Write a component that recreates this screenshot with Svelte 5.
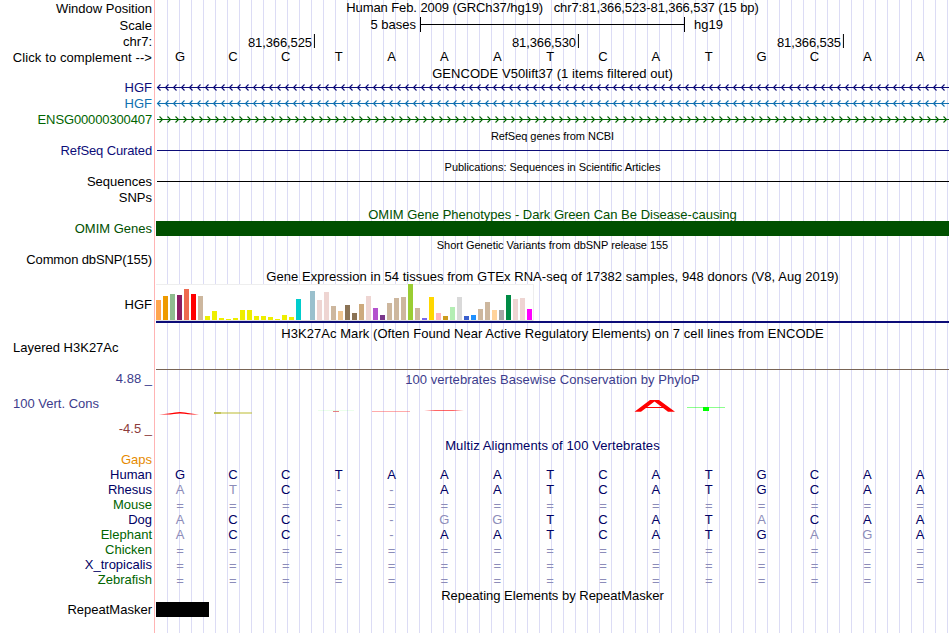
<script lang="ts">
	const strip = (s: string) => s.split("");

	const navy = "#0c0c78";
	const green = "#006400";

	const ticks = [
		{ x: 158, label: "81,366,525" },
		{ x: 422, label: "81,366,530" },
		{ x: 687, label: "81,366,535" },
	];

	const genes = [
		{ name: "HGF", color: navy, dir: -1 },
		{ name: "HGF", color: "#1070b0", dir: -1 },
		{ name: "ENSG00000300407", color: green, dir: 1 },
	];

	const tissues: [number, string][] = [
		[20, "#ffa54f"], [24, "#ee9a00"], [26, "#8fbc8f"], [25, "#8b1c62"], [31, "#ee6a50"], [26, "#ff0000"],
		[24, "#cdb79e"], [4, "#eeee00"], [9, "#eeee00"], [2, "#eeee00"], [1, "#eeee00"], [2, "#eeee00"],
		[10, "#eeee00"], [10, "#eeee00"], [4, "#eeee00"], [4, "#eeee00"], [3, "#eeee00"], [1, "#eeee00"],
		[5, "#eeee00"], [3, "#eeee00"], [21, "#00cdcd"], [0, "#ee82ee"], [29, "#9ac0cd"], [20, "#eed5d2"],
		[28, "#eed5d2"], [14, "#cdb79e"], [9, "#eec591"], [15, "#8b7355"], [7, "#8b7355"], [16, "#cdaa7d"],
		[24, "#eed5d2"], [12, "#b452cd"], [5, "#7a378b"], [17, "#cdb79e"], [22, "#cdb79e"], [23, "#cdb79e"],
		[36, "#9acd32"], [12, "#cdb79e"], [2, "#7a67ee"], [23, "#ffd700"], [7, "#ffb6c1"], [4, "#cd9b1d"],
		[13, "#b4eeb4"], [23, "#d9d9d9"], [4, "#3a5fcd"], [5, "#1e90ff"], [11, "#cdb79e"], [18, "#cdb79e"],
		[10, "#ffd39b"], [10, "#a6a6a6"], [25, "#008b45"], [21, "#eed5d2"], [22, "#eed5d2"], [11, "#ff00ff"],
	];

	// lower case marks a base that differs from human
	const species = [
		{ name: "Gaps", color: "#e68a00", seq: "" },
		{ name: "Human", color: "#000064", seq: "GCCTAAATCATGCAA" },
		{ name: "Rhesus", color: "#000064", seq: "atC--AATCATGCAA" },
		{ name: "Mouse", color: green, seq: "===============" },
		{ name: "Dog", color: "#000064", seq: "aCC--ggTCATaCAA" },
		{ name: "Elephant", color: green, seq: "aCC--AATCATGagA" },
		{ name: "Chicken", color: green, seq: "===============" },
		{ name: "X_tropicalis", color: "#000064", seq: "===============" },
		{ name: "Zebrafish", color: green, seq: "===============" },
	];

	function chevrons(dir: number) {
		let d = "";
		for (let x = dir < 0 ? 1.5 : 6.5; x < 793; x += 8) {
			d += `M${x - dir * 3} 4.5L${x} 7.5L${x - dir * 3} 10.5`;
		}
		return d;
	}
</script>

{#snippet title(text: string, height: number, pad = 0, color = "#000", kind = "")}
	<div class="row" style:height="{height}px">
		<div class="label"></div>
		<div class="title {kind}" style:padding-top="{pad}px" style:color>{text}</div>
	</div>
{/snippet}

<div class="browser">
	<div class="row h16">
		<div class="label down1">Window Position</div>
		<div class="title tight">Human Feb. 2009 (GRCh37/hg19)&nbsp;&nbsp; chr7:81,366,523-81,366,537 (15 bp)</div>
	</div>

	<div class="row h16">
		<div class="label down2">Scale</div>
		<div class="scale">
			<span class="scale-size">5 bases</span>
			<span class="scale-bar"></span>
			<span>hg19</span>
		</div>
	</div>

	<div class="row h16">
		<div class="label down2">chr7:</div>
		<div class="ruler">
			{#each ticks as tick}
				<span class="tick" style:left="{tick.x}px">{tick.label}</span>
			{/each}
		</div>
	</div>

	<div class="row h18">
		<div class="label down2 wide">Click to complement --&gt;</div>
		<div class="bases down1">
			{#each strip("GCCTAAATCATGCAA") as base}<span>{base}</span>{/each}
		</div>
	</div>

	{@render title("GENCODE V50lift37 (1 items filtered out)", 14, 0, "#000", "loose")}
	{#each genes as gene}
		<div class="row h16" style:color={gene.color}>
			<div class="label" class:narrow={gene.name.length > 3}>{gene.name}</div>
			<svg class="gene" width="793" height="16">
				<path d={chevrons(gene.dir)} fill="none" stroke="currentColor" stroke-width="1.1" />
				<rect x="1" y="7" width="792" height="1" fill="currentColor" />
			</svg>
		</div>
	{/each}

	{@render title("RefSeq genes from NCBI", 15, 1, "#000", "small")}
	<div class="row h16 navy">
		<div class="label narrow">RefSeq Curated</div>
		<div class="line"></div>
	</div>

	{@render title("Publications: Sequences in Scientific Articles", 15, 1, "#000", "small")}
	<div class="row h16">
		<div class="label">Sequences</div>
		<div class="line"></div>
	</div>
	<div class="row h16">
		<div class="label">SNPs</div>
	</div>

	{@render title("OMIM Gene Phenotypes - Dark Green Can Be Disease-causing", 15, 1, "#005000")}
	<div class="row h16 omim">
		<div class="label">OMIM Genes</div>
		<div class="block"></div>
	</div>

	{@render title("Short Genetic Variants from dbSNP release 155", 15, 1, "#000", "small")}
	<div class="row h16">
		<div class="label narrow">Common dbSNP(155)</div>
	</div>

	{@render title("Gene Expression in 54 tissues from GTEx RNA-seq of 17382 samples, 948 donors (V8, Aug 2019)", 16, 1, "#000", "loose")}
	<div class="row gtex">
		<div class="label">HGF</div>
		<div class="gtex-track">
			<div class="chart">
				{#each tissues as [value, color]}
					<i style:height="{value}px" style:background={color}></i>
				{/each}
			</div>
		</div>
	</div>

	{@render title("H3K27Ac Mark (Often Found Near Active Regulatory Elements) on 7 cell lines from ENCODE", 17, 3, "#000", "loose")}
	<div class="row layered">
		<div class="label left">Layered H3K27Ac</div>
		<div class="baseline"></div>
	</div>

	<div class="row h18 cons">
		<div class="label down1">4.88 _</div>
		<div class="title down2 loose">100 vertebrates Basewise Conservation by PhyloP</div>
	</div>
	<div class="row phylop cons">
		<div class="label left">100 Vert. Cons</div>
		<svg width="793" height="30">
			<path d="M3 26.4Q14 25.6 19 24.6Q24 23.6 29 24.6Q34 25.6 43 26.4Q33 26.9 28 25.8Q23 25.2 18 26Q13 26.9 3 26.4Z" fill="#f00" />
			<rect x="58" y="24" width="38" height="2" fill="#bbbb30" opacity="0.5" />
			<rect x="58" y="24" width="7" height="2" fill="#aaaa20" opacity="0.5" />
			<rect x="162" y="22" width="36" height="1" fill="#0f0" opacity="0.08" />
			<rect x="177" y="23" width="6" height="1" fill="#e06060" opacity="0.8" />
			<rect x="216" y="23" width="38" height="1" fill="#f44" opacity="0.45" />
			<path d="M268 22.7L279 22H297L308 22.7L297 23H279Z" fill="#f00" opacity="0.6" />
			<path d="M478.500 23.800L494 12H503L519 23.800H512L498.500 13.500L485 23.800Z" fill="#f00" />
			<rect x="488" y="19" width="21" height="1" fill="#f00" />
			<rect x="531" y="19" width="38" height="1" fill="#0f0" opacity="0.45" />
			<rect x="547" y="19" width="6" height="4" fill="#0f0" />
		</svg>
	</div>
	<div class="row cons-min">
		<div class="label">-4.5 _</div>
	</div>

	{@render title("Multiz Alignments of 100 Vertebrates", 14, 0, "#000064", "wide")}
	{#each species as sp}
		<div class="row h15">
			<div class="label" style:color={sp.color}>{sp.name}</div>
			<div class="bases aligned">
				{#each strip(sp.seq) as base}
					<span class:faded={base === base.toLowerCase()} class:gap={base === "="}>{base.toUpperCase()}</span>
				{/each}
			</div>
		</div>
	{/each}

	{@render title("Repeating Elements by RepeatMasker", 15, 1)}
	<div class="row last">
		<div class="label">RepeatMasker</div>
		<div class="block repeat"></div>
	</div>
</div>

<style>
	:global(body) {
		background: #fff;
		overflow: hidden;
	}

	.browser {
		width: 949px;
		height: 633px;
		overflow: hidden;
		font: 13px/15px "Liberation Sans", Arial, sans-serif;
		color: #000;
		background:
			linear-gradient(#ffb4b4, #ffb4b4) 154px 0 / 1px 100% no-repeat,
			repeating-linear-gradient(90deg, #dcdcf5 0 1px, transparent 1px 12px) 167px 0 / 782px 100% no-repeat;
	}

	.row {
		display: grid;
		grid-template-columns: 152px 793px;
		column-gap: 4px;
		white-space: nowrap;
	}

	.h15 {
		height: 15px;
	}

	.h16 {
		height: 16px;
	}

	.h18 {
		height: 18px;
	}

	.label {
		text-align: right;
	}

	.label.left {
		text-align: left;
		padding-left: 13px;
	}

	.down1 {
		padding-top: 1px;
	}

	.down2 {
		padding-top: 2px;
	}

	.title {
		text-align: center;
	}

	.tight {
		letter-spacing: -0.09px;
	}

	.narrow {
		letter-spacing: -0.13px;
	}

	.loose {
		letter-spacing: 0.058px;
	}

	.wide {
		letter-spacing: 0.1px;
	}

	.small {
		font-size: 11px;
		letter-spacing: -0.04px;
	}

	.scale {
		display: flex;
		padding-top: 1px;
	}

	.scale-size {
		width: 260px;
		text-align: right;
	}

	.scale-bar {
		width: 263px;
		height: 15px;
		margin: 0 9px 0 4px;
		border: solid #000;
		border-width: 0 1px;
		background: linear-gradient(#000, #000) 0 7px / 100% 1px no-repeat;
	}

	.ruler {
		position: relative;
	}

	.tick {
		position: absolute;
		top: 2px;
		height: 14px;
		padding-right: 2px;
		border-right: 1px solid #000;
		line-height: 17px;
		letter-spacing: -0.1px;
		transform: translateX(-100%) translateX(1px);
	}

	.bases {
		display: grid;
		grid-template-columns: repeat(15, 1fr);
		width: 793px;
		margin-left: -2.4px;
		text-align: center;
	}

	.aligned {
		color: #000064;
	}

	.faded {
		color: #8c8cb9;
	}

	.gap {
		padding-top: 1px;
	}

	.gene {
		display: block;
	}

	.navy {
		color: #0c0c78;
	}

	.line {
		height: 1px;
		margin: 7px 0 0 1px;
		background: currentColor;
	}

	.omim {
		color: #005000;
	}

	.block {
		height: 15px;
		background: currentColor;
	}

	.repeat {
		width: 53px;
	}

	.gtex {
		height: 39px;
	}

	.gtex .label {
		padding-top: 13px;
	}

	.gtex-track {
		height: 37px;
		border-bottom: 2px solid #0c0c78;
	}

	.chart {
		display: flex;
		align-items: flex-end;
		gap: 2px;
		width: 378px;
		height: 37px;
		box-sizing: border-box;
		background: #fff;
		box-shadow: inset 0 1px #eee, inset -1px 0 #eee, inset 0 -1px #ddd;
		padding-bottom: 1px;
	}

	.chart i {
		width: 5px;
	}

	.layered {
		height: 30px;
	}

	.baseline {
		height: 1px;
		margin-top: 29px;
		background: #786455;
	}

	.cons {
		color: #3c3c8c;
	}

	.phylop {
		height: 30px;
	}

	.phylop .label {
		padding-top: 8px;
	}

	.cons-min {
		height: 20px;
		color: #8c3c3c;
	}

	.cons-min .label {
		padding-top: 3px;
	}

	.last {
		height: 31px;
	}
</style>
